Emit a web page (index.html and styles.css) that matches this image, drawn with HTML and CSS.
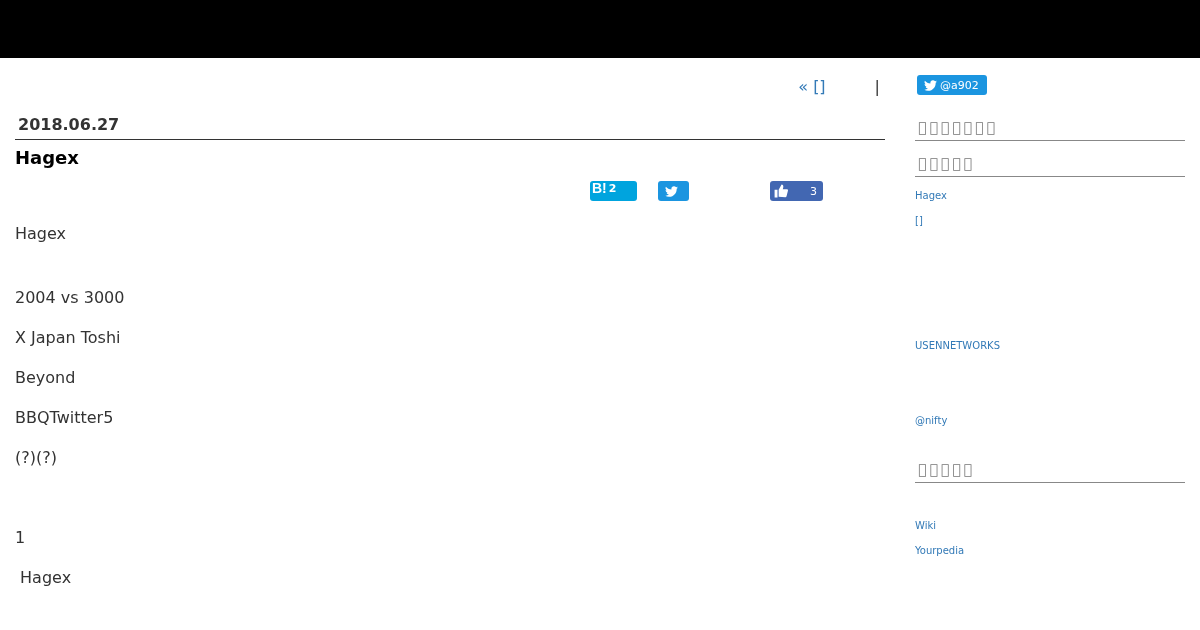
FILE: index.html
```html
<!DOCTYPE html>
<html>
  <head>
    <title>Hagex</title>
    <link rel="stylesheet" href="styles.css">
  </head>
  <body>
    <div class="header"></div>
    <div class="container">
      <div class="main">
        <div class="pager">
          <a href="#">« []</a>
          <span class="sep">|</span>
        </div>
        <h2 class="date">2018.06.27</h2>
        <h1 class="title">Hagex</h1>
        <div class="share">
          <a class="btn hatena" href="#"><b>B!</b><b class="count">2</b></a>
          <a class="btn tweet" href="#">
            <svg class="icon" viewBox="0 0 24 24"><path d="M23.95 4.57a10 10 0 0 1-2.82.77 4.96 4.96 0 0 0 2.16-2.72c-.95.55-2 .96-3.13 1.19a4.92 4.92 0 0 0-8.38 4.48C7.69 8.1 4.07 6.13 1.64 3.16a4.82 4.82 0 0 0-.67 2.48c0 1.71.87 3.21 2.19 4.1a4.9 4.9 0 0 1-2.23-.62v.06a4.92 4.92 0 0 0 3.95 4.83 5 5 0 0 1-2.21.08 4.94 4.94 0 0 0 4.6 3.42A9.87 9.87 0 0 1 0 19.54a14 14 0 0 0 7.56 2.21c9.05 0 14-7.5 14-13.98 0-.21 0-.42-.02-.63a9.94 9.94 0 0 0 2.41-2.57z"/></svg>
          </a>
          <a class="btn like" href="#">
            <svg class="icon" viewBox="0 0 24 24"><path d="M1 10h5v13H1zM8 22V10l5-9c2 0 3 1.500 3 3.500 0 1.500-.5 3-1 4.500h7c1.200 0 2 .9 2 2l-2.500 10c-.3 1-1 1.500-2 1.500z"/></svg>
            <span>3</span>
          </a>
        </div>
        <div class="entry">
          <p class="gap">Hagex</p>
          <p>2004 vs 3000</p>
          <p>X Japan Toshi</p>
          <p>Beyond</p>
          <p>BBQTwitter5</p>
          <p class="gap-big">(?)(?)</p>
          <p>1</p>
          <p>&nbsp;Hagex</p>
        </div>
      </div>
      <div class="side">
        <a class="follow" href="#">
          <svg class="icon" viewBox="0 0 24 24"><path d="M23.95 4.57a10 10 0 0 1-2.82.77 4.96 4.96 0 0 0 2.16-2.72c-.95.55-2 .96-3.13 1.19a4.92 4.92 0 0 0-8.38 4.48C7.69 8.1 4.07 6.13 1.64 3.16a4.82 4.82 0 0 0-.67 2.48c0 1.71.87 3.21 2.19 4.1a4.9 4.9 0 0 1-2.23-.62v.06a4.92 4.92 0 0 0 3.95 4.83 5 5 0 0 1-2.21.08 4.94 4.94 0 0 0 4.6 3.42A9.87 9.87 0 0 1 0 19.54a14 14 0 0 0 7.56 2.21c9.05 0 14-7.5 14-13.98 0-.21 0-.42-.02-.63a9.94 9.94 0 0 0 2.41-2.57z"/></svg>
          @a902
        </a>
        <h3 class="side-title first">&#xE000;&#xE000;&#xE000;&#xE000;&#xE000;&#xE000;&#xE000;</h3>
        <h3 class="side-title">&#xE000;&#xE000;&#xE000;&#xE000;&#xE000;</h3>
        <ul class="links">
          <li><a href="#">Hagex</a></li>
          <li class="far"><a href="#">[]</a></li>
          <li class="mid"><a href="#">USENNETWORKS</a></li>
          <li><a href="#">@nifty</a></li>
        </ul>
        <h3 class="side-title">&#xE000;&#xE000;&#xE000;&#xE000;&#xE000;</h3>
        <ul class="links lower">
          <li><a href="#">Wiki</a></li>
          <li><a href="#">Yourpedia</a></li>
        </ul>
      </div>
    </div>
  </body>
</html>
```

FILE: styles.css
```css
body {
  font-family: "DejaVu Sans", sans-serif;
  margin: 0;
  color: #333;
  height: 630px;
  overflow: hidden;
}

a {
  color: #337ab7;
  text-decoration: none;
}

.header {
  background-color: #000;
  height: 58px;
}

.container {
  display: flex;
  will-change: transform;
}

.main {
  width: 870px;
  padding-left: 15px;
}

.pager {
  display: flex;
  justify-content: flex-end;
  gap: 49px;
  font-size: 16px;
  line-height: 24px;
  padding: 17px 5px 0 0;
}

.sep {
  color: #333;
}

.date {
  font-size: 16px;
  line-height: 24px;
  margin: 14px 0 0;
  padding: 0 0 2px 3px;
  border-bottom: 1px solid #333;
}

.title {
  font-size: 18px;
  line-height: 24px;
  margin: 6px 0 0;
  color: #000;
}

.share {
  display: flex;
  height: 20px;
  margin-top: 11px;
  padding-left: 575px;
}

.btn {
  display: flex;
  height: 20px;
  border-radius: 3px;
  color: #fff;
  font-size: 11px;
}

.icon {
  width: 13px;
  height: 13px;
  fill: #fff;
}

.hatena {
  width: 45px;
  padding-left: 2px;
  background-color: #00a4de;
  gap: 2px;
  line-height: 14px;
}

.hatena b {
  font-family: "Liberation Sans", sans-serif;
  font-size: 14px;
}

.hatena .count {
  font-family: "DejaVu Sans", sans-serif;
  font-size: 11px;
  line-height: 15px;
}

.tweet {
  width: 24px;
  padding-left: 7px;
  margin-left: 21px;
  background-color: #1b95e0;
  align-items: center;
}

.like {
  width: 53px;
  margin-left: 81px;
  background-color: #4267b2;
  align-items: center;
  justify-content: space-between;
  padding: 0 6px 0 4px;
  box-sizing: border-box;
}

.like .icon {
  width: 14px;
  height: 14px;
}

.entry {
  margin-top: 21px;
  font-size: 16px;
  line-height: 24px;
}

.entry p {
  margin: 0 0 16px;
}

.entry .gap {
  margin-bottom: 40px;
}

.entry .gap-big {
  margin-bottom: 56px;
}

.side {
  width: 270px;
  margin-left: 30px;
  font-size: 10px;
}

.follow {
  display: inline-flex;
  align-items: center;
  gap: 3px;
  width: 70px;
  height: 20px;
  margin: 17px 0 0 2px;
  padding-left: 7px;
  box-sizing: border-box;
  border-radius: 3px;
  background-color: #1b95e0;
  color: #fff;
  font-size: 11px;
}

.side-title {
  font-size: 14px;
  font-weight: normal;
  line-height: 20px;
  letter-spacing: 3px;
  color: #777;
  margin: 12px 0 0;
  padding: 0 0 3px 3px;
  border-bottom: 1px solid #888;
}

.side-title.first {
  margin-top: 22px;
}

.links {
  list-style: none;
  margin: 0 0 31px;
  padding: 11px 0 0;
}

.links li {
  line-height: 15px;
  margin-bottom: 10px;
}

.links .far {
  margin-bottom: 110px;
}

.links .mid {
  margin-bottom: 60px;
}

.links.lower {
  padding-top: 35px;
}
```
